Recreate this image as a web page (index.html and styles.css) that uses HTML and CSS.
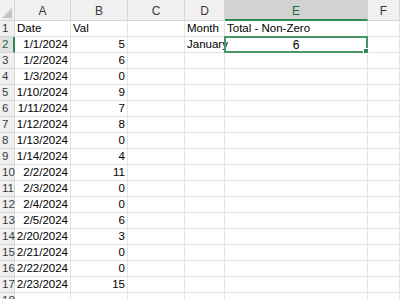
FILE: index.html
```html
<!DOCTYPE html>
<html>
<head>
<meta charset="utf-8">
<link rel="stylesheet" href="styles.css">
</head>
<body>
<div class="sheet">
  <div class="hd corner"><span class="tri"></span></div>
  <div class="hd col">A</div>
  <div class="hd col">B</div>
  <div class="hd col">C</div>
  <div class="hd col">D</div>
  <div class="hd col sel">E</div>
  <div class="hd col">F</div>

  <div class="hd rn">1</div><div class="c">Date</div><div class="c">Val</div><div class="c"></div><div class="c">Month</div><div class="c">Total - Non-Zero</div><div class="c"></div>
  <div class="hd rn rsel">2</div><div class="c r">1/1/2024</div><div class="c r">5</div><div class="c"></div><div class="c">January</div><div class="c ctr active">6<span class="handle"></span></div><div class="c"></div>
  <div class="hd rn">3</div><div class="c r">1/2/2024</div><div class="c r">6</div><div class="c"></div><div class="c"></div><div class="c"></div><div class="c"></div>
  <div class="hd rn">4</div><div class="c r">1/3/2024</div><div class="c r">0</div><div class="c"></div><div class="c"></div><div class="c"></div><div class="c"></div>
  <div class="hd rn">5</div><div class="c r">1/10/2024</div><div class="c r">9</div><div class="c"></div><div class="c"></div><div class="c"></div><div class="c"></div>
  <div class="hd rn">6</div><div class="c r">1/11/2024</div><div class="c r">7</div><div class="c"></div><div class="c"></div><div class="c"></div><div class="c"></div>
  <div class="hd rn">7</div><div class="c r">1/12/2024</div><div class="c r">8</div><div class="c"></div><div class="c"></div><div class="c"></div><div class="c"></div>
  <div class="hd rn">8</div><div class="c r">1/13/2024</div><div class="c r">0</div><div class="c"></div><div class="c"></div><div class="c"></div><div class="c"></div>
  <div class="hd rn">9</div><div class="c r">1/14/2024</div><div class="c r">4</div><div class="c"></div><div class="c"></div><div class="c"></div><div class="c"></div>
  <div class="hd rn">10</div><div class="c r">2/2/2024</div><div class="c r">11</div><div class="c"></div><div class="c"></div><div class="c"></div><div class="c"></div>
  <div class="hd rn">11</div><div class="c r">2/3/2024</div><div class="c r">0</div><div class="c"></div><div class="c"></div><div class="c"></div><div class="c"></div>
  <div class="hd rn">12</div><div class="c r">2/4/2024</div><div class="c r">0</div><div class="c"></div><div class="c"></div><div class="c"></div><div class="c"></div>
  <div class="hd rn">13</div><div class="c r">2/5/2024</div><div class="c r">6</div><div class="c"></div><div class="c"></div><div class="c"></div><div class="c"></div>
  <div class="hd rn">14</div><div class="c r">2/20/2024</div><div class="c r">3</div><div class="c"></div><div class="c"></div><div class="c"></div><div class="c"></div>
  <div class="hd rn">15</div><div class="c r">2/21/2024</div><div class="c r">0</div><div class="c"></div><div class="c"></div><div class="c"></div><div class="c"></div>
  <div class="hd rn">16</div><div class="c r">2/22/2024</div><div class="c r">0</div><div class="c"></div><div class="c"></div><div class="c"></div><div class="c"></div>
  <div class="hd rn">17</div><div class="c r">2/23/2024</div><div class="c r">15</div><div class="c"></div><div class="c"></div><div class="c"></div><div class="c"></div>
  <div class="hd rn">18</div><div class="c"></div><div class="c"></div><div class="c"></div><div class="c"></div><div class="c"></div><div class="c"></div>
</div>
</body>
</html>
```
FILE: styles.css
```css
html, body {
  margin: 0;
  padding: 0;
  background: #ffffff;
  overflow: hidden;
  width: 400px;
  height: 299px;
}
.sheet {
  display: grid;
  grid-template-columns: 15px 56px 57px 57px 40px 143px 1fr;
  grid-template-rows: 21px repeat(18, 16px);
  font-family: "Liberation Sans", Arial, sans-serif;
  font-size: 11.5px;
  color: #000;
}
.hd {
  background: #f0f0f0;
  border-right: 1px solid #d6d6d6;
  border-bottom: 1px solid #d6d6d6;
  box-sizing: border-box;
  color: #3a3a3a;
  display: flex;
  align-items: center;
  justify-content: center;
  line-height: 1;
}
.col {
  font-size: 12px;
  padding-top: 2px;
}
.corner {
  position: relative;
}
.tri {
  position: absolute;
  right: 2px;
  bottom: 2px;
  width: 0;
  height: 0;
  border-left: 10px solid transparent;
  border-bottom: 10px solid #c4c4c4;
}
.sel {
  background: #d2d2d2;
  border-bottom: 2px solid #2f8a57;
  color: #1e6b40;
}
.rn {
  justify-content: flex-start;
  padding-left: 2px;
  padding-top: 1px;
  font-size: 11.5px;
}
.rsel {
  background: #e2e2e2;
  color: #1e6b40;
  border-right: 2px solid #2f8a57;
}
.c {
  border-right: 1px solid #e3e3e3;
  border-bottom: 1px solid #e3e3e3;
  box-sizing: border-box;
  padding: 1px 2px 0;
  white-space: nowrap;
  overflow: visible;
  display: flex;
  align-items: center;
  line-height: 1;
}
.r {
  justify-content: flex-end;
}
.ctr {
  justify-content: center;
}
.active {
  position: relative;
  border: 2px solid #4a9468;
  margin: -1px 0 0 -1px;
  width: calc(100% + 1px);
  height: 17px;
  font-size: 12px;
}
.handle {
  position: absolute;
  right: -3px;
  bottom: -3px;
  width: 4px;
  height: 4px;
  background: #2f8a57;
  border: 1px solid #fff;
}
```
